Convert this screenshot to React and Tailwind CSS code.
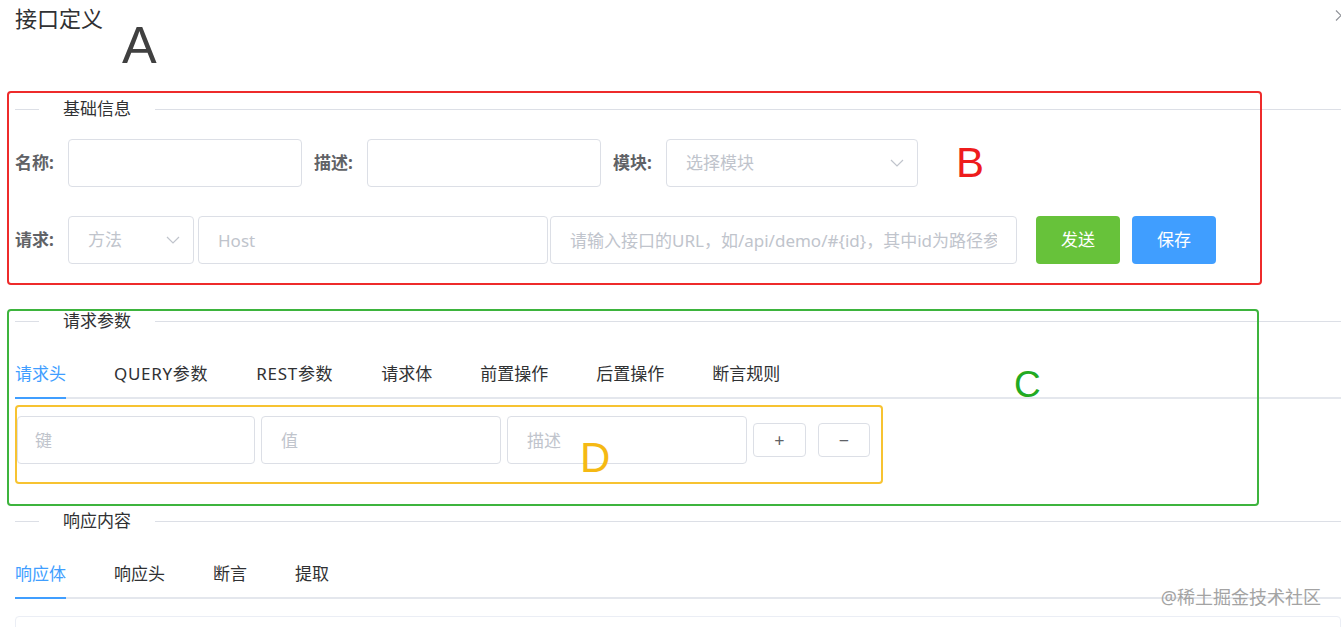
const inputCls =
  "h-[48px] rounded-[4px] border border-[#dcdfe6] bg-white px-[19px] text-[17px] text-[#606266] outline-none placeholder:text-[#c0c4cc]";

function Chevron() {
  return (
    <svg width="14" height="8" viewBox="0 0 14 8" fill="none">
      <polyline points="1,1 7,7 13,1" stroke="#c0c4cc" strokeWidth="1.2" />
    </svg>
  );
}

function Divider({ title }) {
  return (
    <div className="flex h-5 items-center">
      <div className="h-px w-[24px] bg-[#dcdfe6]" />
      <span className="px-[24px] text-[17px] leading-5 text-[#303133]">{title}</span>
      <div className="h-px flex-1 bg-[#dcdfe6]" />
    </div>
  );
}

function Tabs({ items }) {
  return (
    <div className="flex h-[42px] items-start border-b-2 border-[#e4e7ed]">
      {items.map((t, i) => {
        const latin = /[A-Z]/.test(t);
        let cls = "mr-[48px] h-[40px] text-[17px] leading-[34px] text-[#303133]";
        if (i === 0) cls = "mr-[48px] h-[42px] border-b-2 border-[#409eff] text-[17px] leading-[34px] text-[#409eff]";
        return (
          <div key={t} className={latin ? `${cls} tracking-[0.7px]` : cls}>
            {t}
          </div>
        );
      })}
    </div>
  );
}

function Select({ text, width }) {
  return (
    <div
      className={`flex h-[48px] items-center justify-between rounded-[4px] border border-[#dcdfe6] pl-[19px] pr-[13px] ${width}`}
    >
      <span className="text-[17px] text-[#c0c4cc]">{text}</span>
      <Chevron />
    </div>
  );
}

function Label({ text, className = "" }) {
  return (
    <span className={`inline-block w-[38px] shrink-0 whitespace-nowrap text-[17px] font-bold text-[#606266] ${className}`}>
      {text}
    </span>
  );
}

export default function App() {
  return (
    <div className="relative h-[627px] w-full overflow-hidden bg-white font-['Noto_Sans','Noto_Sans_CJK_SC',sans-serif]">
      <div className="flex h-[99px] items-start justify-between pl-[15px]">
        <h1 className="pt-[3px] text-[22px] leading-[30px] text-[#303133]">接口定义</h1>
        <svg className="-mr-[6px] mt-[10px]" width="12" height="11" viewBox="0 0 12 11" fill="none">
          <path d="M1 0.5 L11 10.5 M11 0.5 L1 10.5" stroke="#909399" strokeWidth="1.2" />
        </svg>
      </div>

      <div className="pl-[15px]">
        <Divider title="基础信息" />

        <div className="mt-[20px] flex h-[48px] items-center">
          <Label text="名称:" />
          <input className={`ml-[15px] w-[234px] ${inputCls}`} />
          <Label text="描述:" className="ml-[12px]" />
          <input className={`ml-[15px] w-[234px] ${inputCls}`} />
          <Label text="模块:" className="ml-[12px]" />
          <div className="ml-[15px]">
            <Select text="选择模块" width="w-[252px]" />
          </div>
        </div>

        <div className="mt-[29px] flex h-[48px] items-center">
          <Label text="请求:" />
          <div className="ml-[15px]">
            <Select text="方法" width="w-[126px]" />
          </div>
          <input className={`ml-[4px] w-[350px] ${inputCls}`} placeholder="Host" />
          <input
            className={`ml-[2px] w-[467px] ${inputCls}`}
            placeholder="请输入接口的URL，如/api/demo/#{id}，其中id为路径参数"
          />
          <button className="ml-[19px] h-[48px] w-[84px] rounded-[4px] bg-[#67c23a] text-[17px] text-white">
            发送
          </button>
          <button className="ml-[12px] h-[48px] w-[84px] rounded-[4px] bg-[#409eff] text-[17px] text-white">
            保存
          </button>
        </div>

        <div className="mt-[47px]">
          <Divider title="请求参数" />
        </div>
        <div className="mt-[26px]">
          <Tabs items={["请求头", "QUERY参数", "REST参数", "请求体", "前置操作", "后置操作", "断言规则"]} />
        </div>

        <div className="mt-[17px] flex h-[48px] items-center pl-[2px]">
          <input className={`w-[238px] pl-[17px] ${inputCls}`} placeholder="键" />
          <input className={`ml-[6px] w-[240px] ${inputCls}`} placeholder="值" />
          <input className={`ml-[6px] w-[240px] ${inputCls}`} placeholder="描述" />
          <button className="ml-[6px] h-[34px] w-[53px] rounded-[4px] border border-[#dcdfe6] text-[18px] leading-none text-[#606266]">
            +
          </button>
          <button className="ml-[12px] h-[34px] w-[52px] rounded-[4px] border border-[#dcdfe6] text-[18px] leading-none text-[#606266]">
            −
          </button>
        </div>

        <div className="mt-[47px]">
          <Divider title="响应内容" />
        </div>
        <div className="mt-[26px]">
          <Tabs items={["响应体", "响应头", "断言", "提取"]} />
        </div>
        <div className="mt-[17px] h-[60px] rounded-[4px] border border-[#ebeef5]" />
      </div>

      {/* annotation overlays */}
      <div className="pointer-events-none absolute left-[7px] top-[91px] h-[194px] w-[1255px] rounded-[4px] border-2 border-[#ee2b2b]" />
      <div className="pointer-events-none absolute left-[7px] top-[309px] h-[197px] w-[1252px] rounded-[4px] border-2 border-[#3db43d]" />
      <div className="pointer-events-none absolute left-[15px] top-[405px] h-[79px] w-[868px] rounded-[4px] border-2 border-[#f7c331]" />

      <span className="absolute left-[122px] top-[19px] font-['Liberation_Sans',sans-serif] text-[52px] leading-none text-[#404040]">
        A
      </span>
      <span className="absolute left-[956px] top-[142px] font-['Liberation_Sans',sans-serif] text-[42px] leading-none text-[#ee1c1c]">
        B
      </span>
      <span className="absolute left-[1014px] top-[366px] font-['Liberation_Sans',sans-serif] text-[37px] leading-none text-[#22aa22]">
        C
      </span>
      <span className="absolute left-[580px] top-[437px] font-['Liberation_Sans',sans-serif] text-[42px] leading-none text-[#f5b914]">
        D
      </span>

      <span className="absolute right-[20px] top-[585px] text-[18px] leading-6 text-[#a3a3a3]">
        @稀土掘金技术社区
      </span>
    </div>
  );
}
